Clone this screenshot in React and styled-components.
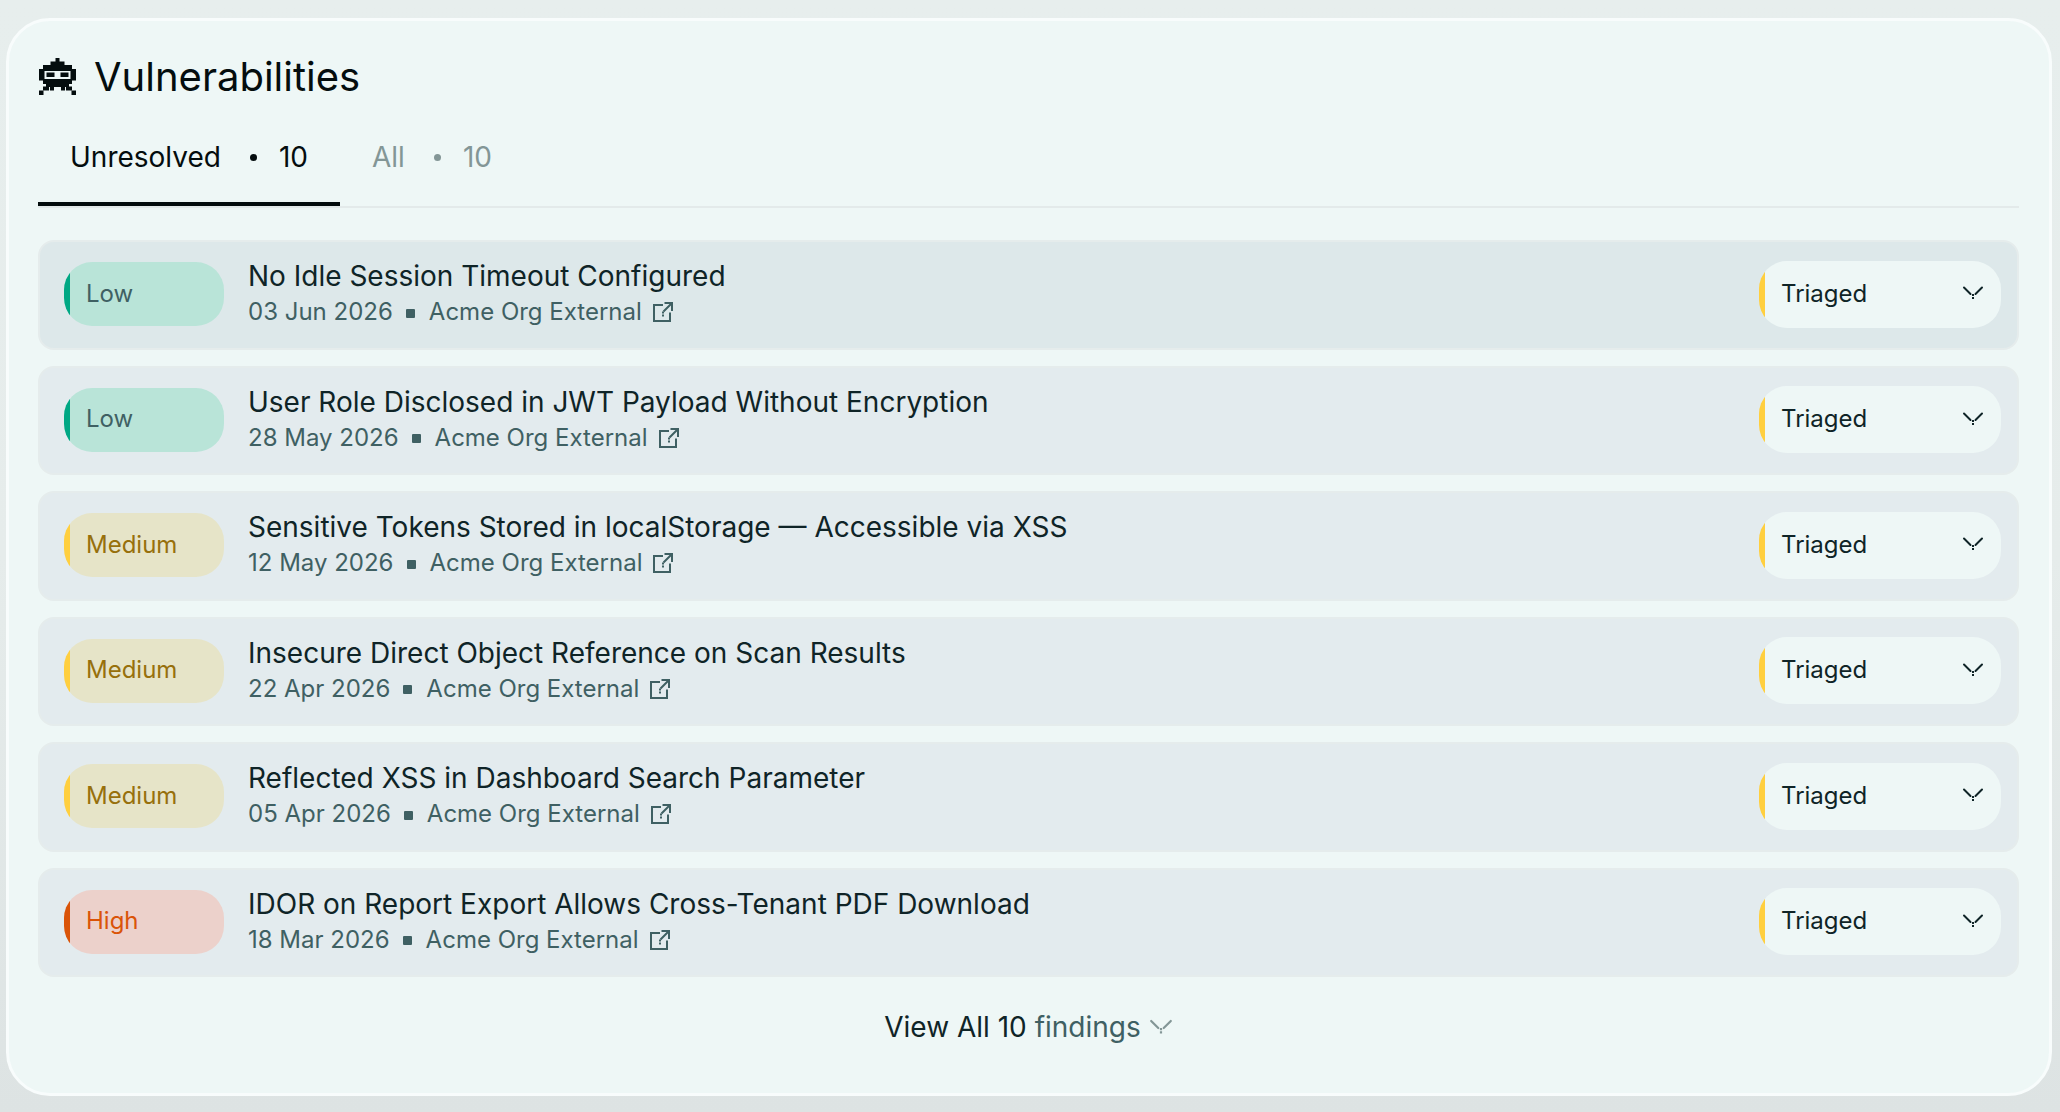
import React, { useState } from "react";
import styled, { createGlobalStyle } from "styled-components";

const GlobalStyle = createGlobalStyle`
*{
  box-sizing: border-box;
}
body{
  margin: 0;
  min-height: 100vh;
  background: linear-gradient(180deg, #e7eeed 0%, #e6eceb 50%, #dde3e3 100%);
  font-family: Inter, "Liberation Sans", sans-serif;
  color: #0f2427;
}
button, select{
  font-family: inherit;
}
`
const Page = styled.main`
padding: 18px 8px 15px 6px;
`
const Card = styled.section`
border: 3px solid #f8fcfc;
border-radius: 44px;
background-color: #eef7f6;
padding: 32px 30px 46px 29px;
`
const Header = styled.header`
display: flex;
align-items: center;
gap: 17px;
height: 48px;
`
const Title = styled.h1`
margin: 0;
font-size: 40px;
font-weight: 400;
line-height: 48px;
color: #040d0e;
`
const Tabs = styled.nav`
display: flex;
height: 107px;
border-bottom: 2px solid #e3eaea;
`
const Tab = styled.button`
display: flex;
align-items: center;
padding: 10px 32px 0;
border: none;
border-bottom: 4px solid ${(props) => (props.$active ? "#040d0e" : "transparent")};
background: none;
font-size: 28px;
color: ${(props) => (props.$active ? "#040d0e" : "#839696")};
cursor: pointer;
`
const Dot = styled.span`
width: 7px;
height: 7px;
margin: 2px 22px 0 29px;
border-radius: 50%;
background-color: currentColor;
`
const List = styled.ul`
display: flex;
flex-direction: column;
gap: 16px;
margin: 0;
padding: 32px 0 0;
list-style: none;
`
const Row = styled.li`
display: flex;
align-items: center;
gap: 24px;
height: 110px;
padding: 0 16px 2px 24px;
border: 2px solid #e5ecec;
border-radius: 16px;
background-color: ${(props) => (props.$active ? "#dde8ea" : "#e3ebee")};

&:nth-child(even){
  height: 109px;
}
`
const Badge = styled.span`
display: flex;
flex-shrink: 0;
align-items: center;
width: 160px;
height: 64px;
padding: 0 0 2px 22px;
border-radius: 28px;
background: linear-gradient(90deg, ${(props) => props.$bar} 6px, ${(props) => props.$fill} 6px);
font-size: 24px;
color: ${(props) => props.$ink};
`
const Info = styled.div`
flex: 1;
min-width: 0;
`
const Name = styled.h2`
margin: 0;
font-size: 28px;
font-weight: 400;
line-height: 36px;
`
const Meta = styled.div`
display: flex;
align-items: center;
font-size: 24px;
line-height: 36px;
color: #3f6063;
`
const Square = styled.span`
width: 9px;
height: 9px;
margin: 2px 14px 0 13px;
border-radius: 1px;
background-color: currentColor;
`
const Asset = styled.a`
display: flex;
align-items: center;
gap: 10px;
color: inherit;
text-decoration: none;
`
const StatusBox = styled.div`
display: grid;
flex-shrink: 0;
align-items: center;
width: 242px;
height: 67px;

> *{
  grid-area: 1 / 1;
}
svg{
  justify-self: end;
  margin: 0 17px 2px 0;
  pointer-events: none;
}
`
const Select = styled.select`
appearance: none;
width: 100%;
height: 100%;
padding: 0 48px 2px 22px;
border: none;
border-radius: 28px;
background: linear-gradient(90deg, #ffcf3f 6px, #eef7f6 6px);
font-size: 24px;
color: #0f2427;
`
const ViewAll = styled.button`
display: flex;
align-items: center;
gap: 8px;
margin: 30px auto 0;
padding: 0;
border: none;
background: none;
font-size: 28px;
line-height: 40px;
color: #0f2427;
cursor: pointer;
`
const Muted = styled.span`
color: #3f6063;
`

const severities = {
  Low: { bar: "#00a884", fill: "#b9e4d8", ink: "#3f6063" },
  Medium: { bar: "#ffcf3f", fill: "#e6e4c8", ink: "#97700c" },
  High: { bar: "#da5408", fill: "#ecd1cb", ink: "#da5408" },
};

const findings = [
  { severity: "Low", name: "No Idle Session Timeout Configured", date: "03 Jun 2026" },
  { severity: "Low", name: "User Role Disclosed in JWT Payload Without Encryption", date: "28 May 2026" },
  { severity: "Medium", name: "Sensitive Tokens Stored in localStorage — Accessible via XSS", date: "12 May 2026" },
  { severity: "Medium", name: "Insecure Direct Object Reference on Scan Results", date: "22 Apr 2026" },
  { severity: "Medium", name: "Reflected XSS in Dashboard Search Parameter", date: "05 Apr 2026" },
  { severity: "High", name: "IDOR on Report Export Allows Cross-Tenant PDF Download", date: "18 Mar 2026" },
];

function InvaderIcon() {
  return (
    <svg width="39" height="38" viewBox="-1 0 39 38" fill="#040d0e" aria-hidden="true">
      <path d="M16.5 0h4v4h-4zM11.5 3.5h14v4h-14zM4 7h29v4.500H4z" />
      <path fillRule="evenodd" d="M0 11h37v11.500H0zM5.500 13v8h26v-8z" />
      <path d="M7.500 14.500h8V19h-8zM21.500 14.500h8V19h-8z" />
      <path d="M4 22h29v4H4zM7 25.500h23V29H7z" />
      <path d="M4 28.500h6v4H4zM27 28.500h6v4h-6zM11 28.500h4v4h-4zM22 28.500h4v4h-4z" />
      <path d="M0 32.500h4.500V37H0zM32.500 32.500H37V37h-4.500z" />
    </svg>
  );
}

function ExternalIcon() {
  return (
    <svg width="22" height="22" viewBox="0 0 22 22" fill="none" stroke="currentColor" strokeWidth="2" aria-hidden="true">
      <path d="M11 4H2v16h16v-8.500" />
      <path d="M12.500 2H20v8M20 2l-8.500 8.500" />
      <path d="M10 11.500h2M10 14.500h2" />
    </svg>
  );
}

function Chevron({ size = 22, color = "#0f2427" }) {
  return (
    <svg width={size} height={size} viewBox="0 0 22 22" fill="none" stroke={color} strokeWidth="2" aria-hidden="true">
      <path d="M2 5.500l6.500 6.500M20 5.500L13.500 12" strokeLinecap="round" />
      <path d="M10 13h2M10 16h2" />
    </svg>
  );
}

function Finding({ item, active }) {
  const [status, setStatus] = useState("Triaged");
  const tone = severities[item.severity];

  return (
    <Row $active={active}>
      <Badge $bar={tone.bar} $fill={tone.fill} $ink={tone.ink}>
        {item.severity}
      </Badge>
      <Info>
        <Name>{item.name}</Name>
        <Meta>
          <span>{item.date}</span>
          <Square />
          <Asset href="#asset">
            Acme Org External
            <ExternalIcon />
          </Asset>
        </Meta>
      </Info>
      <StatusBox>
        <Select
          aria-label={`Status of ${item.name}`}
          value={status}
          onChange={(e) => setStatus(e.target.value)}
        >
          <option>Triaged</option>
        </Select>
        <Chevron />
      </StatusBox>
    </Row>
  );
}

function App() {
  const [tab, setTab] = useState("Unresolved");

  return (
    <Page>
      <GlobalStyle />
      <Card>
        <Header>
          <InvaderIcon />
          <Title>Vulnerabilities</Title>
        </Header>
        <Tabs>
          {["Unresolved", "All"].map((name) => (
            <Tab key={name} $active={tab === name} onClick={() => setTab(name)}>
              {name}
              <Dot />
              10
            </Tab>
          ))}
        </Tabs>
        <List>
          {findings.map((item, index) => (
            <Finding key={item.name} item={item} active={index === 0} />
          ))}
        </List>
        <ViewAll>
          <span>
            View All 10 <Muted>findings</Muted>
          </span>
          <Chevron size={24} color="#839696" />
        </ViewAll>
      </Card>
    </Page>
  );
}

export default App;
